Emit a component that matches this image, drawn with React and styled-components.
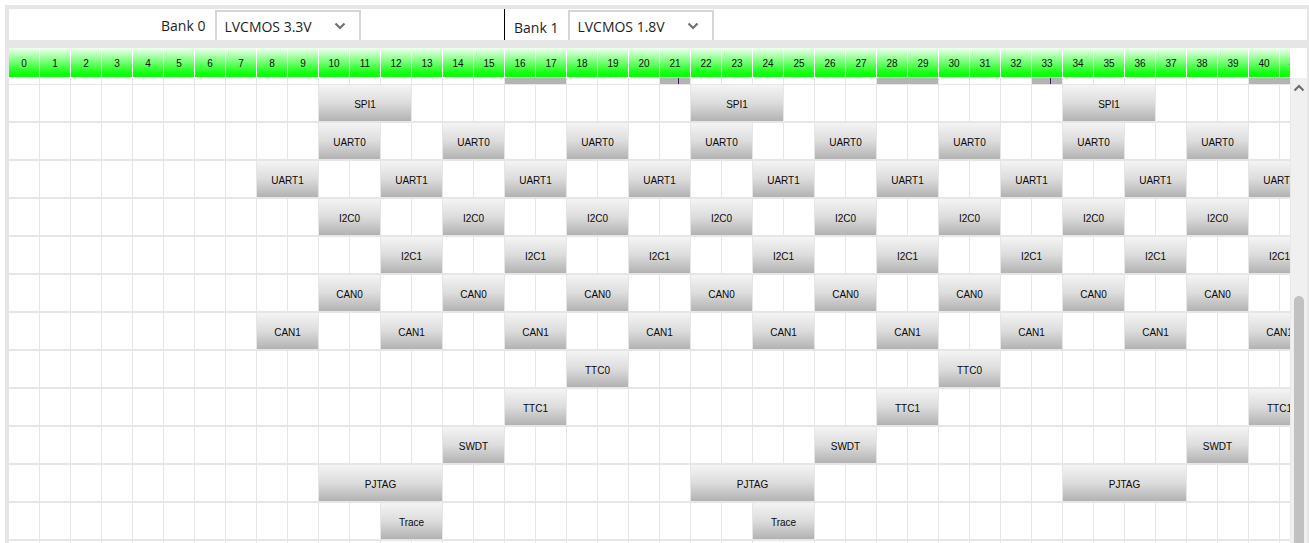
import React from 'react';
import styled, { createGlobalStyle } from 'styled-components';

const COLS = 42;
const LINE = '#e6e6e6';

const GlobalStyle = createGlobalStyle`
  html, body { margin: 0; padding: 0; background: #fff; overflow: hidden; }
  #root { height: 543px; }
`;

const Frame = styled.div`
  box-sizing: border-box;
  margin: 5px 0 0 5px;
  width: 1304px;
  height: 538px;
  border: 4px solid ${LINE};
  border-right-width: 2px;
  border-bottom: none;
  display: flex;
  flex-direction: column;
  overflow: hidden;
  background: #fff;
`;

const HeaderBar = styled.div`
  display: flex;
  height: 31px;
  flex: none;
`;

const BankPanel = styled.div`
  box-sizing: border-box;
  display: flex;
  align-items: flex-end;
  width: ${p => (p.$width ? `${p.$width}px` : 'auto')};
  flex: ${p => (p.$width ? 'none' : '1')};
  padding-left: ${p => p.$pad}px;
  border-right: ${p => (p.$divider ? '1px solid #000' : 'none')};
`;

const BankLabel = styled.span`
  font-family: 'Open Sans', 'Noto Sans', sans-serif;
  font-size: 14px;
  color: #1e1e1e;
  height: 30px;
  line-height: 30px;
  padding-top: ${p => p.$drop}px;
  box-sizing: border-box;
  margin-right: 10px;
`;

const Select = styled.div`
  box-sizing: border-box;
  width: 146px;
  height: 30px;
  border: 2px solid #d6d6d6;
  border-bottom: none;
  display: flex;
  align-items: center;
  justify-content: space-between;
  padding: 0 13px 0 7px;
  font-family: 'Open Sans', 'Noto Sans', sans-serif;
  font-size: 14px;
  color: #1e1e1e;
`;

const Chevron = ({ up }) => (
  <svg width="12" height="8" viewBox="0 0 12 8">
    <polyline
      points={up ? '1.5,6.5 6,2 10.5,6.5' : '1.5,1.5 6,6 10.5,1.5'}
      fill="none"
      stroke={up ? '#6e6e6e' : '#707070'}
      strokeWidth="2.2"
    />
  </svg>
);

const GapStrip = styled.div`
  height: 8px;
  flex: none;
  background: ${LINE};
`;

const PinHeaderRow = styled.div`
  display: flex;
  height: 29px;
  flex: none;
`;

const Viewport = styled.div`
  width: 1281px;
  flex: none;
  overflow: hidden;
`;

const ColumnGrid = styled.div`
  display: grid;
  grid-template-columns: repeat(${COLS}, 30px);
  column-gap: 1px;
  width: max-content;
  height: ${p => p.$h}px;
  border-bottom: ${p => p.$line || 0}px solid ${LINE};
  background: ${p => p.$bg};
`;

const PinCell = styled.div`
  background: linear-gradient(180deg, #f2fff2 0%, #7dff7d 45%, #14ff14 85%, #00ff00 100%);
  display: flex;
  align-items: center;
  justify-content: center;
  padding-top: 2px;
  box-sizing: border-box;
  font-family: 'Liberation Sans', Arial, sans-serif;
  font-size: 10px;
  color: #111;
`;

const Body = styled.div`
  display: flex;
  flex: 1;
  min-height: 0;
`;

const StripCell = styled.div`
  background: #fff;
`;

const StripBar = styled.div`
  grid-column: span ${p => p.$span};
  background: #b4b4b4;
  margin-top: 1px;
  height: 6px;
  display: flex;
  padding-left: 18px;
`;

const Tick = styled.div`
  width: 1px;
  height: 6px;
  background: #4a1a5e;
`;

const EmptyCell = styled.div`
  background: #fff;
`;

const Block = styled.div`
  grid-column: span ${p => p.$span};
  background: linear-gradient(180deg, #f4f4f4 0%, #dcdcdc 50%, #b2b2b2 100%);
  display: flex;
  align-items: center;
  justify-content: center;
  padding-top: 2px;
  box-sizing: border-box;
  font-family: 'Liberation Sans', Arial, sans-serif;
  font-size: 10px;
  color: #0a0a0a;
  white-space: nowrap;
`;

const Scrollbar = styled.div`
  flex: 1;
  margin-top: 1px;
  background: #f0f0f0;
  border-left: 1px solid #e9e9e9;
  display: flex;
  flex-direction: column;
  align-items: center;
`;

const ScrollButton = styled.div`
  height: 20px;
  display: flex;
  align-items: center;
  justify-content: center;
  flex: none;
`;

const Thumb = styled.div`
  margin-top: 198px;
  width: 10px;
  flex: 1;
  background: #c1c1c1;
  border-radius: 5px 5px 0 0;
`;

const range = (start, step, count) => Array.from({ length: count }, (_, i) => start + i * step);

const ROWS = [
  { name: 'SPI1', span: 3, starts: [10, 22, 34] },
  { name: 'UART0', span: 2, starts: range(10, 4, 8) },
  { name: 'UART1', span: 2, starts: range(8, 4, 9) },
  { name: 'I2C0', span: 2, starts: range(10, 4, 8) },
  { name: 'I2C1', span: 2, starts: range(12, 4, 8) },
  { name: 'CAN0', span: 2, starts: range(10, 4, 8) },
  { name: 'CAN1', span: 2, starts: range(8, 4, 9) },
  { name: 'TTC0', span: 2, starts: [18, 30] },
  { name: 'TTC1', span: 2, starts: [16, 28, 40] },
  { name: 'SWDT', span: 2, starts: [14, 26, 38] },
  { name: 'PJTAG', span: 4, starts: [10, 22, 34] },
  { name: 'Trace', span: 2, starts: [12, 24] },
  { name: '', span: 2, starts: [] },
];

const STRIP = [
  { start: 16, span: 2 },
  { start: 21, span: 1, tick: true },
  { start: 28, span: 2 },
  { start: 33, span: 1, tick: true },
  { start: 40, span: 2 },
];

function PeripheralRow({ row }) {
  const cells = [];
  let c = 0;
  while (c < COLS) {
    if (row.starts.includes(c)) {
      cells.push(
        <Block key={c} $span={row.span}>
          {row.name}
        </Block>
      );
      c += row.span;
    } else {
      cells.push(<EmptyCell key={c} />);
      c += 1;
    }
  }
  return (
    <ColumnGrid $h={36} $line={2} $bg={LINE}>
      {cells}
    </ColumnGrid>
  );
}

function BankStrip() {
  const cells = [];
  let c = 0;
  while (c < COLS) {
    const bar = STRIP.find(s => s.start === c);
    if (bar) {
      cells.push(
        <StripBar key={c} $span={bar.span}>
          {bar.tick && <Tick />}
        </StripBar>
      );
      c += bar.span;
    } else {
      cells.push(<StripCell key={c} />);
      c += 1;
    }
  }
  return (
    <ColumnGrid $h={6} $line={2} $bg={LINE}>
      {cells}
    </ColumnGrid>
  );
}

export default function App() {
  return (
    <>
      <GlobalStyle />
      <Frame>
        <HeaderBar>
          <BankPanel $width={496} $pad={152} $divider>
            <BankLabel $drop={1}>Bank 0</BankLabel>
            <Select>
              <span>LVCMOS 3.3V</span>
              <Chevron />
            </Select>
          </BankPanel>
          <BankPanel $pad={9}>
            <BankLabel $drop={3}>Bank 1</BankLabel>
            <Select>
              <span>LVCMOS 1.8V</span>
              <Chevron />
            </Select>
          </BankPanel>
        </HeaderBar>
        <GapStrip />
        <PinHeaderRow>
          <Viewport>
            <ColumnGrid $h={29} $bg="#fff">
              {range(0, 1, COLS).map(n => (
                <PinCell key={n}>{n}</PinCell>
              ))}
            </ColumnGrid>
          </Viewport>
        </PinHeaderRow>
        <Body>
          <Viewport>
            <BankStrip />
            {ROWS.map((row, i) => (
              <PeripheralRow key={i} row={row} />
            ))}
          </Viewport>
          <Scrollbar>
            <ScrollButton>
              <Chevron up />
            </ScrollButton>
            <Thumb />
          </Scrollbar>
        </Body>
      </Frame>
    </>
  );
}
